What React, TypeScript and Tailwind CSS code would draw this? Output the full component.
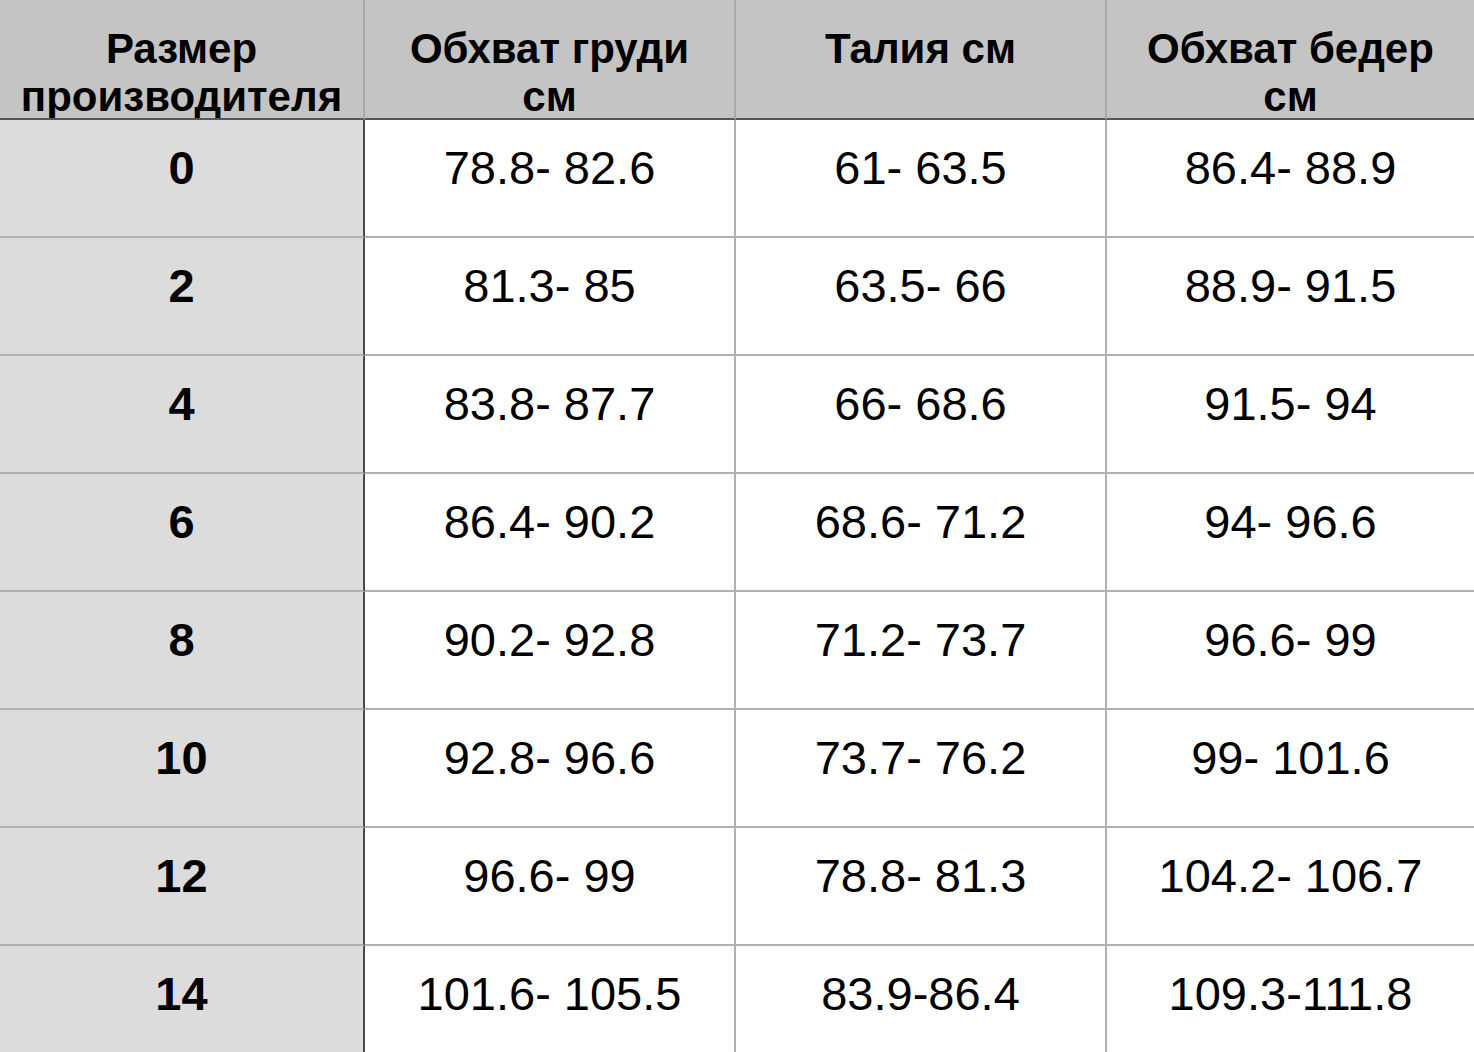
// size chart table

const headers: string[][] = [
  ["Размер", "производителя"],
  ["Обхват груди", "см"],
  ["Талия см"],
  ["Обхват бедер", "см"],
];

const rows: string[][] = [
  ["0", "78.8- 82.6", "61- 63.5", "86.4- 88.9"],
  ["2", "81.3- 85", "63.5- 66", "88.9- 91.5"],
  ["4", "83.8- 87.7", "66- 68.6", "91.5- 94"],
  ["6", "86.4- 90.2", "68.6- 71.2", "94- 96.6"],
  ["8", "90.2- 92.8", "71.2- 73.7", "96.6- 99"],
  ["10", "92.8- 96.6", "73.7- 76.2", "99- 101.6"],
  ["12", "96.6- 99", "78.8- 81.3", "104.2- 106.7"],
  ["14", "101.6- 105.5", "83.9-86.4", "109.3-111.8"],
];

export default function App() {
  return (
    <div
      className="w-[1474px] h-[1052px] overflow-hidden bg-white text-black"
      style={{ fontFamily: '"Liberation Sans", Arial, sans-serif' }}
    >
      <div className="grid grid-cols-[365px_371px_371px_1fr]">
        {headers.map((lines, i) => (
          <div
            key={i}
            className={
              "h-[120px] overflow-hidden bg-[#c4c4c4] border-b-2 border-b-[#555555] pt-[25px] text-center text-[42px] leading-[48px] font-bold whitespace-nowrap " +
              (i < 3 ? "border-r-2 border-r-[#a9a9a9]" : "")
            }
          >
            {lines.map((l, j) => (
              <div key={j}>{l}</div>
            ))}
          </div>
        ))}
        {rows.map((row, r) =>
          row.map((cell, c) => (
            <div
              key={r + "-" + c}
              className={
                "h-[118px] border-b-2 border-b-[#b0b0b0] pt-[24px] text-center text-[47px] leading-[48px] whitespace-nowrap " +
                (c === 0
                  ? "bg-[#dcdcdc] font-bold border-r-2 border-r-[#4a4a4a]"
                  : c < 3
                  ? "border-r-2 border-r-[#b0b0b0]"
                  : "")
              }
            >
              {cell}
            </div>
          ))
        )}
      </div>
    </div>
  );
}
